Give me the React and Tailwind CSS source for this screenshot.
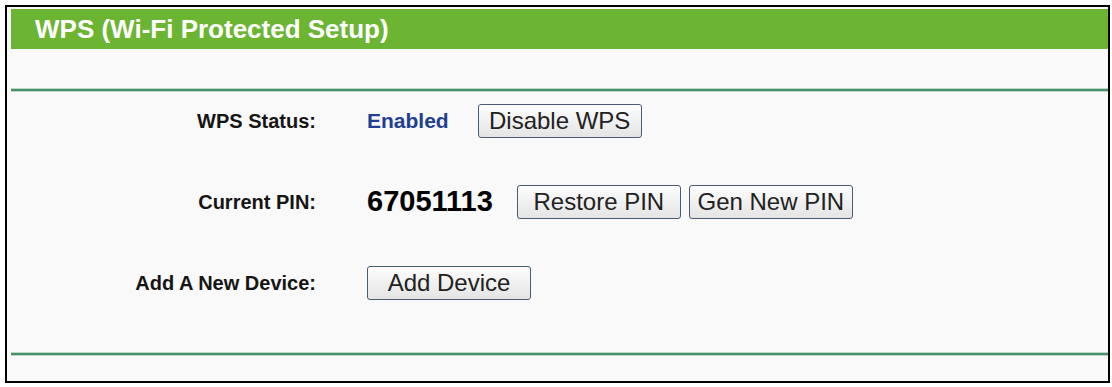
const FONT = "font-['Liberation_Sans',Arial,sans-serif]";

function Btn({ children }) {
  return (
    <button className="h-[34px] w-[164px] shrink-0 rounded-[3px] border border-[#4b5b73] bg-gradient-to-b from-[#fdfdfd] to-[#e4e4e4] text-[24px] leading-none text-[#222]">
      {children}
    </button>
  );
}

function Rule() {
  return <div className="h-[2px] bg-[#4b8c6b] shadow-[0_1px_0_#b9dcc9,0_-1px_0_#b9dcc9]" />;
}

function Row({ label, children }) {
  return (
    <div className="flex h-[34px] items-center">
      <div className="w-[305px] text-right text-[20px] font-bold text-[#151515]">{label}</div>
      <div className="ml-[51px] flex items-center">{children}</div>
    </div>
  );
}

export default function App() {
  return (
    <div className={`${FONT} h-[387px] w-[1112px] bg-white pl-[5px] pt-[5px]`}>
      <div className="flex h-[378px] w-[1105px] flex-col border-2 border-black bg-[#f9f9f9] pl-[4px] pt-[2px]">
        {/* Title bar */}
        <div className="flex h-[40px] items-center bg-[#6bb532] pl-[24px]">
          <span className="text-[26px] font-bold leading-none text-white">WPS (Wi-Fi Protected Setup)</span>
        </div>

        <div className="mt-[40px]"><Rule /></div>

        <div className="mt-[13px] flex flex-col gap-[47px]">
          <Row label="WPS Status:">
            <span className="text-[21px] font-bold text-[#213f92]">Enabled</span>
            <div className="ml-[29px]"><Btn>Disable WPS</Btn></div>
          </Row>
          <Row label="Current PIN:">
            <span className="text-[29px] font-bold text-black">67051113</span>
            <div className="ml-[24px] flex gap-[8px]">
              <Btn>Restore PIN</Btn>
              <Btn>Gen New PIN</Btn>
            </div>
          </Row>
          <Row label="Add A New Device:">
            <Btn>Add Device</Btn>
          </Row>
        </div>

        <div className="mt-[53px]"><Rule /></div>
      </div>
    </div>
  );
}
